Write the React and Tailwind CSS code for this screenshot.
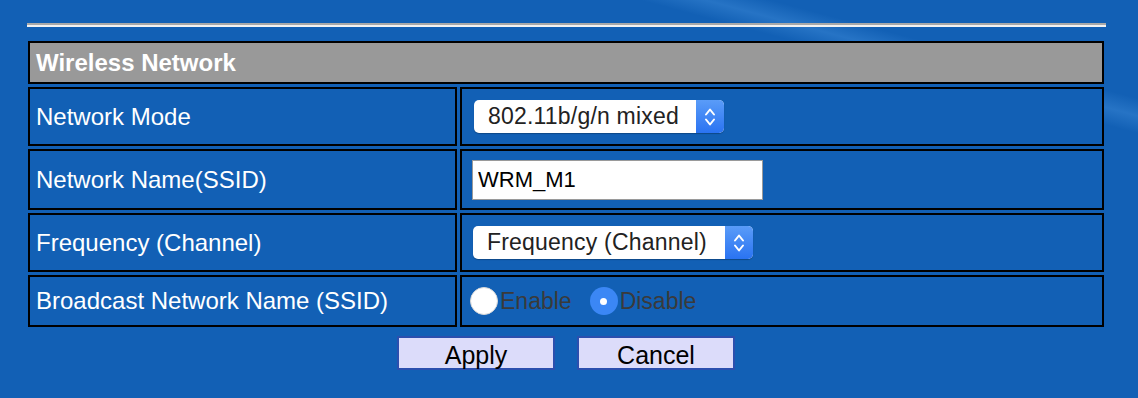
import { useState } from "react";

const Chevrons = () => (
    <svg width="12" height="22" viewBox="0 0 12 22" fill="none">
        <path d="M2 8.5 L6 3.5 L10 8.5" stroke="white" strokeWidth="2" strokeLinecap="round" strokeLinejoin="round" />
        <path d="M2 13.5 L6 18.5 L10 13.5" stroke="white" strokeWidth="2" strokeLinecap="round" strokeLinejoin="round" />
    </svg>
);

const FakeSelect = ({ value, width }) => (
    <div className={`flex h-[33px] ${width} items-stretch rounded-[5px] bg-white shadow-[0_1px_1px_rgba(0,0,0,0.25)]`}>
        <div className="flex-1 pl-[14px] flex items-center text-[23px] tracking-[0.2px] text-[#222] leading-none">{value}</div>
        <div className="w-[28px] rounded-r-[5px] bg-[linear-gradient(#5a9cf8,#2a73f2)] flex items-center justify-center">
            <Chevrons />
        </div>
    </div>
);

const Radio = ({ on }) =>
    on ? (
        <span className="w-[28px] h-[28px] rounded-full bg-[#3b87f5] flex items-center justify-center">
            <span className="w-[7px] h-[7px] rounded-full bg-white" />
        </span>
    ) : (
        <span className="w-[28px] h-[28px] rounded-full bg-white border border-[#d8d8d8]" />
    );

const Row = ({ label, h, children }) => (
    <>
        <div className={`${h} border-2 border-black flex items-center pl-[6px] text-white text-[24px]`}>{label}</div>
        <div className={`${h} border-2 border-black flex items-center`}>{children}</div>
    </>
);

const App = () => {
    const [broadcast, setBroadcast] = useState("disable");
    const [ssid, setSsid] = useState("WRM_M1");

    return (
        <div className="w-[1138px] h-[398px] overflow-hidden bg-[#1260b5] bg-[linear-gradient(195deg,transparent_14%,rgba(110,185,255,0.22)_16.5%,transparent_19%)] font-['Liberation_Sans',Arial,sans-serif]">
            <div className="pl-[27px] pt-[23px]">
                <div className="w-[1079px] h-[4px] border-t-2 border-[#a9a9a9] border-b-2 border-b-[#f2f2f2]" />

                <div className="ml-[1px] mt-[14px] w-[1076px] grid grid-cols-[429px_644px] gap-[3px] bg-[#1260b5]">
                    <div className="col-span-2 h-[43px] border-2 border-black bg-[#999999] flex items-center pl-[6px] text-white font-bold text-[24px]">
                        Wireless Network
                    </div>

                    <Row label="Network Mode" h="h-[59px]">
                        <div className="ml-[12px]">
                            <FakeSelect value="802.11b/g/n mixed" width="w-[250px]" />
                        </div>
                    </Row>

                    <Row label="Network Name(SSID)" h="h-[61px]">
                        <input
                            value={ssid}
                            onChange={(e) => setSsid(e.target.value)}
                            className="ml-[10px] w-[291px] h-[40px] border border-[#9a9a9a] bg-white pl-[5px] text-[22px] text-black outline-none"
                        />
                    </Row>

                    <Row label="Frequency (Channel)" h="h-[59px]">
                        <div className="ml-[11px]">
                            <FakeSelect value="Frequency (Channel)" width="w-[280px]" />
                        </div>
                    </Row>

                    <Row label="Broadcast Network Name (SSID)" h="h-[52px]">
                        <div className="ml-[8px] flex items-center text-[23px] text-[#3a3a3a]">
                            <button onClick={() => setBroadcast("enable")} className="flex items-center">
                                <Radio on={broadcast === "enable"} />
                                <span className="ml-[2px]">Enable</span>
                            </button>
                            <button onClick={() => setBroadcast("disable")} className="ml-[18px] flex items-center">
                                <Radio on={broadcast === "disable"} />
                                <span className="ml-[2px]">Disable</span>
                            </button>
                        </div>
                    </Row>
                </div>

                <div className="w-[1078px] mt-[9px] flex justify-center gap-[22px]">
                    <button className="w-[158px] h-[34px] border-2 border-[#2b4fae] bg-[#dcdcfa] text-black text-[25px] leading-none pt-[5px]">
                        Apply
                    </button>
                    <button className="w-[158px] h-[34px] border-2 border-[#2b4fae] bg-[#dcdcfa] text-black text-[25px] leading-none pt-[5px]">
                        Cancel
                    </button>
                </div>
            </div>
        </div>
    );
};

export default App;
